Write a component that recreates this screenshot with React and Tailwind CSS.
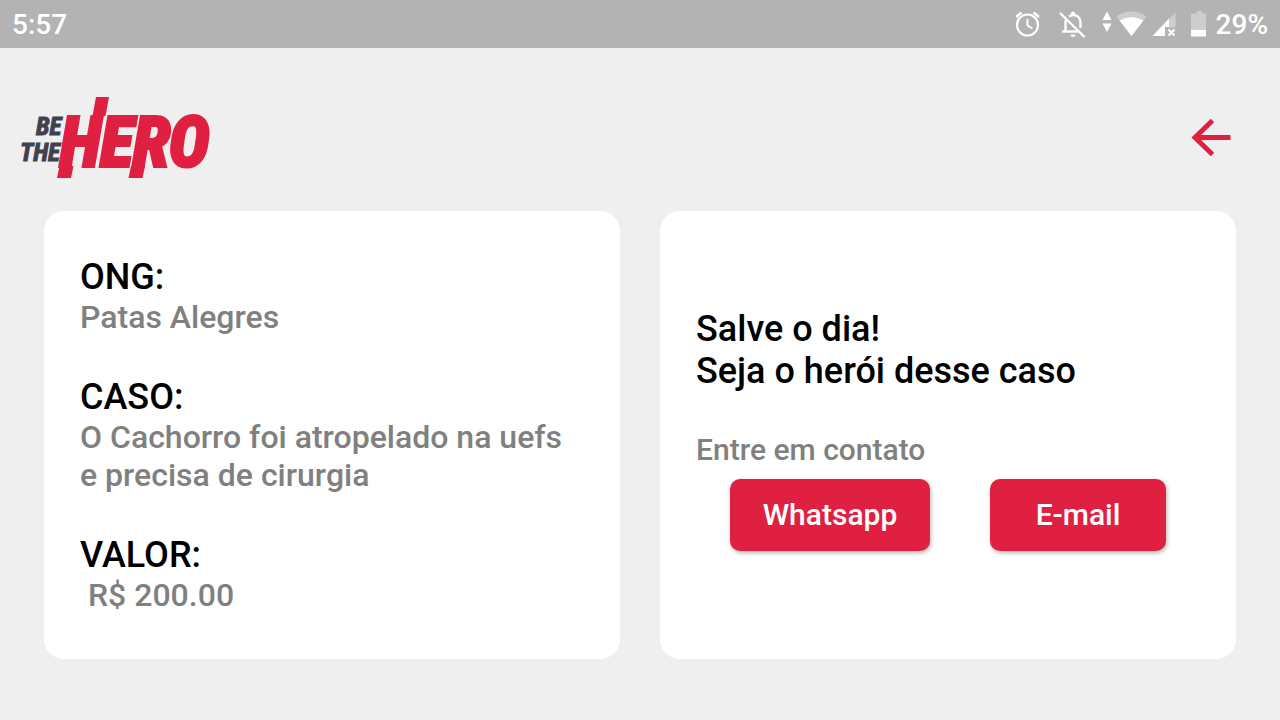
import React from "react";

function StatusIcons() {
  return (
    <svg className="h-12 w-48 shrink-0" viewBox="0 0 192 48" fill="none" aria-hidden="true">
      {/* alarm */}
      <g stroke="#fff" strokeWidth="2.2">
        <circle cx="11.5" cy="25" r="10.5" />
        <path d="M11.5 19v6.500l5 3" strokeWidth="1.900" />
        <path d="M0 17l5.500-4.500M23 17l-5.500-4.500" strokeWidth="2.600" />
      </g>
      {/* bell off */}
      <g stroke="#fff" strokeWidth="2.400">
        <path d="M50 20c-.5 1-.5 2-.5 3v8.500M53 16.500c6-3.500 11.500 0 11.500 6.500v5" />
        <path d="M46 31.500h18" />
        <path d="M44 13l24.500 24" />
      </g>
      <path d="M55 15v-1.500a2 2 0 0 1 4 0v1.500zM54.500 34.500h5a2.500 2.500 0 0 1-5 0z" fill="#fff" />
      {/* data arrows */}
      <path d="M86.500 20l4.500-8.500 4.500 8.500zM86.500 23.500l4.500 8.500 4.500-8.500z" fill="#fff" />
      {/* wifi */}
      <path d="M100.500 16.500q15-10 30 0L115.500 36z" fill="#fff" fillOpacity=".35" />
      <path d="M103.500 20.500q12-7 24 0L115.500 36z" fill="#fff" />
      {/* cell signal */}
      <path d="M159.500 12.500v15h-8v-7z" fill="#fff" fillOpacity=".35" />
      <path d="M136.500 36L153 18.500V27h-4v9z" fill="#fff" />
      <path d="M152.500 29.500l6 6M158.500 29.500l-6 6" stroke="#fff" strokeWidth="2" />
      {/* battery */}
      <path d="M176.500 13.500h4v-2.500h6v2.500h3.500v17h-15v-15.500q0-1.500 1.500-1.500z" fill="#fff" fillOpacity=".35" />
      <path d="M175 30h15v6.500h-15z" fill="#fff" />
    </svg>
  );
}

function Logo() {
  return (
    <svg className="h-24 w-48 shrink-0" viewBox="0 0 192 96" role="img" aria-label="Be The Hero">
      <g fontFamily="'Roboto Condensed', 'Liberation Sans Narrow', 'Liberation Sans', sans-serif" fontWeight="700" fontStyle="italic">
        <g fill="#41414d" stroke="#41414d" strokeWidth="1">
          <text x="16" y="45" fontSize="25">BE</text>
          <text x="0" y="71" fontSize="25">THE</text>
        </g>
        <text x="40" y="76" fontSize="68" fill="#e02041" stroke="#e02041" strokeWidth="4">HERO</text>
      </g>
      {/* slanted accents above and below the word */}
      <g fill="#e02041">
        <path d="M76 7h13l-3.500 19H72.500z" />
        <path d="M39.500 76h14l-2.500 12H37z" />
        <path d="M111 76h14l-2.500 12h-14z" />
      </g>
    </svg>
  );
}

function Field({ label, children }) {
  return (
    <div>
      <dt className="text-4xl/[42px] font-medium text-black">{label}</dt>
      <dd className="text-[32px]/[38px] font-medium whitespace-pre-wrap text-[#808080]">{children}</dd>
    </div>
  );
}

function ContactButton({ className, children }) {
  return (
    <button
      type="button"
      className={`h-18 rounded-[10px] bg-[#e02041] text-[30px] font-medium text-white shadow-[1px_2px_4px_rgba(0,0,0,0.3)] ${className}`}
    >
      {children}
    </button>
  );
}

export default function App() {
  return (
    <div className="min-h-screen bg-[#efefef] font-['Roboto',sans-serif]">
      <div className="flex h-12 items-center justify-between bg-[#b3b3b3] px-3 text-[28px] font-medium text-white">
        <span className="pt-0.5">5:57</span>
        <div className="flex items-center gap-2">
          <StatusIcons />
          <span className="pt-0.5">29%</span>
        </div>
      </div>

      <header className="flex items-center justify-between pt-[42px] pr-[45px] pb-[25px] pl-5">
        <Logo />
        <button type="button" aria-label="Voltar" className="p-1">
          <svg className="size-10" viewBox="0 0 40 40" fill="none" stroke="#e02041" strokeWidth="5" aria-hidden="true">
            <path d="M39.500 19.500H4M21.500 2.500L4 19.500L21.500 36.500" />
          </svg>
        </button>
      </header>

      <main className="grid grid-cols-2 gap-10 px-11 pb-10">
        <section className="flex min-h-112 flex-col justify-center rounded-[20px] bg-white px-9 py-6">
          <dl className="flex flex-col gap-10">
            <Field label="ONG:">Patas Alegres</Field>
            <Field label="CASO:">O Cachorro foi atropelado na uefs e precisa de cirurgia</Field>
            <Field label="VALOR:">{" R$ 200.00"}</Field>
          </dl>
        </section>

        <section className="flex min-h-112 flex-col justify-center rounded-[20px] bg-white px-9 py-6">
          <h1 className="text-4xl/[42px] font-medium text-black">
            Salve o dia!
            <br />
            Seja o herói desse caso
          </h1>
          <p className="mt-10 text-[30px]/[35px] font-medium text-[#808080]">Entre em contato</p>
          <div className="flex justify-center gap-15 py-3">
            <ContactButton className="w-50">Whatsapp</ContactButton>
            <ContactButton className="w-44">E-mail</ContactButton>
          </div>
        </section>
      </main>
    </div>
  );
}
